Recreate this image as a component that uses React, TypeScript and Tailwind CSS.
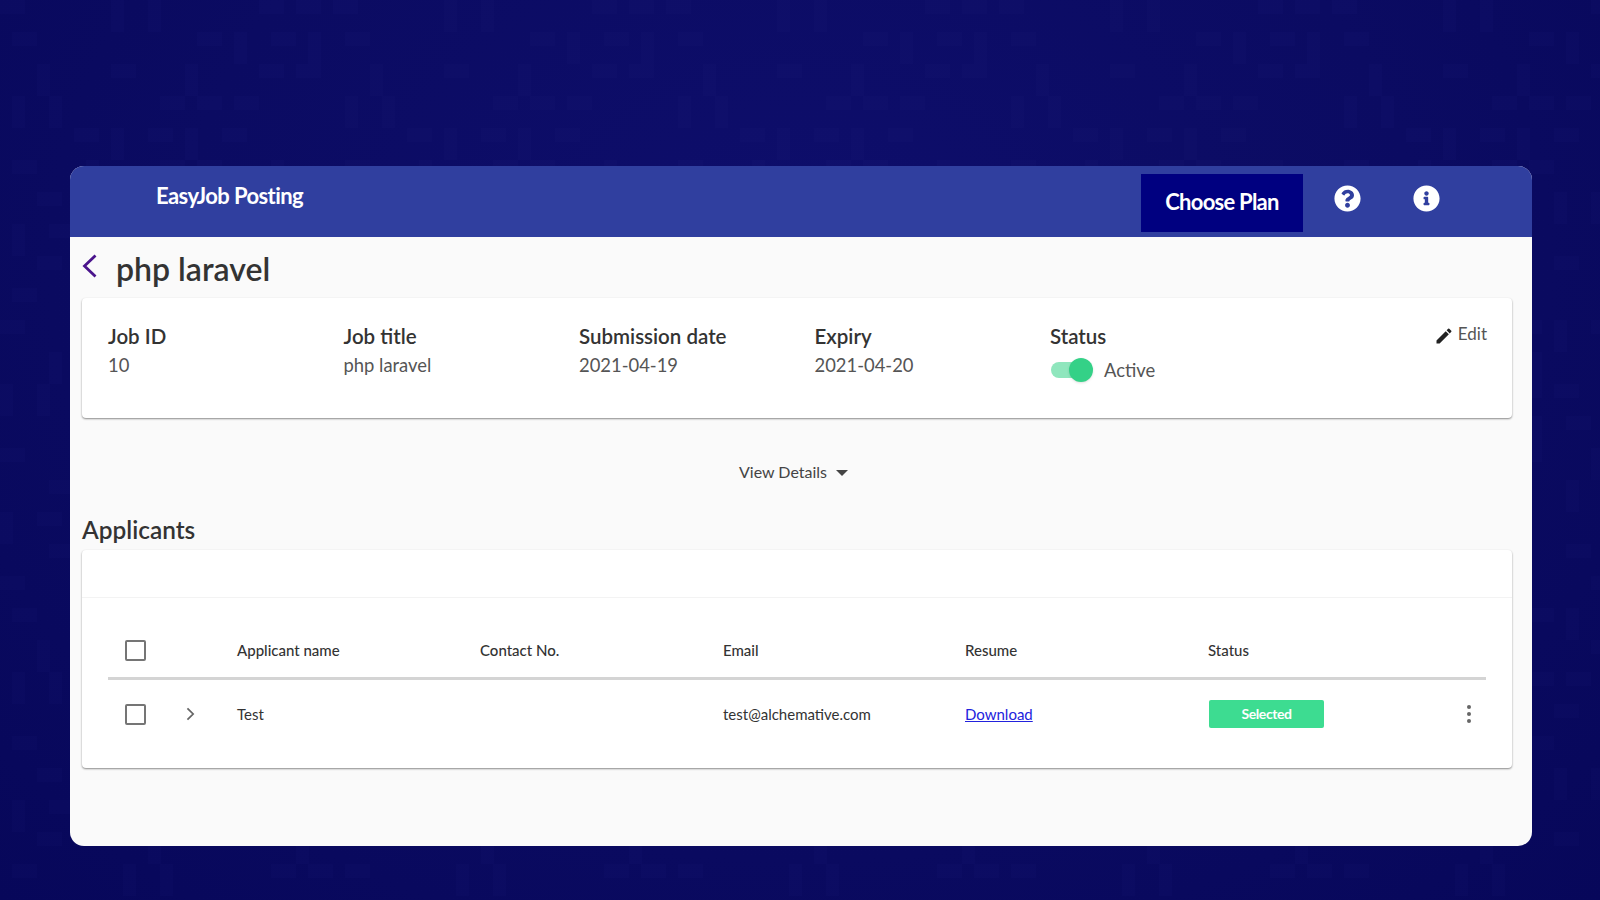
import { FaQuestionCircle, FaInfoCircle } from "react-icons/fa";
import { MdEdit } from "react-icons/md";

const summary = [
  { label: "Job ID", value: "10" },
  { label: "Job title", value: "php laravel" },
  { label: "Submission date", value: "2021-04-19" },
  { label: "Expiry", value: "2021-04-20" },
];

// faint maze-like blocks in the page background
const blocks: { x: number; y: number; w: number; h: number }[] = [];
for (let row = 0; row < 28; row++) {
  for (let col = 0; col < 44; col++) {
    const n = (col * 7 + row * 13 + col * row * 3) % 9;
    if (n < 5) {
      const vertical = n === 1 || n === 3;
      blocks.push({
        x: col * 37 + (row % 2) * 12,
        y: row * 32,
        w: vertical ? 13 : 25,
        h: vertical ? 32 : 14,
      });
    }
  }
}

function Checkbox() {
  return <span className="block h-[21px] w-[21px] rounded-[2px] border-2 border-[#757575] bg-white" />;
}

export default function App() {
  return (
    <div className="relative h-[900px] overflow-hidden bg-[#0a0a5e] bg-[radial-gradient(ellipse_at_50%_30%,#0e0e6c_0%,#0b0b62_55%,#07075a_100%)] pt-[166px] pl-[70px] font-['Lato',sans-serif]">
      <svg className="absolute inset-0 h-full w-full" viewBox="0 0 1600 900">
        {blocks.map((b, i) => (
          <rect key={i} x={b.x} y={b.y} width={b.w} height={b.h} fill="#2a2a90" opacity="0.07" />
        ))}
      </svg>
      <div className="relative flex h-[680px] w-[1462px] flex-col overflow-hidden rounded-[14px] bg-[#fafafa]">
        {/* Header */}
        <header className="flex h-[71px] shrink-0 items-start bg-[#303f9f] pl-[86px] text-white">
          <span className="mt-[16px] text-[22px] font-bold leading-[28px] tracking-[-0.6px]">EasyJob Posting</span>
          <button className="mt-[8px] ml-auto flex h-[58px] w-[162px] items-center justify-center bg-[#000080] pb-[3px] text-[22px] font-bold tracking-[-0.75px]">
            Choose Plan
          </button>
          <FaQuestionCircle className="mt-[19px] ml-[31px] text-[27px]" />
          <FaInfoCircle className="mt-[19px] ml-[52px] mr-[92px] text-[27px]" />
        </header>

        <div className="flex flex-col px-[12px]">
          {/* Title */}
          <div className="flex h-[61px] items-center">
            <svg viewBox="0 0 16 24" className="mb-[3px] h-[24px] w-[16px] fill-none stroke-[#4a148c] stroke-[2.8]">
              <path d="M13.5 1.5 2.5 12l11 10.5" />
            </svg>
            <h1 className="mt-[2px] ml-[18px] text-[32px] font-semibold leading-[40px] text-[#333333]">php laravel</h1>
          </div>

          {/* Job summary */}
          <section className="relative flex h-[120px] w-[1430px] rounded-[4px] bg-white pt-[25px] pl-[26px] shadow-[0_1px_2px_rgba(0,0,0,0.45)]">
            {summary.map((item) => (
              <div key={item.label} className="w-[235.5px]">
                <div className="text-[20.5px] font-semibold leading-[26px] text-[#333333]">{item.label}</div>
                <div className="mt-[3px] text-[18.4px] leading-[26px] text-[#555555]">{item.value}</div>
              </div>
            ))}
            <div>
              <div className="text-[20.5px] font-semibold leading-[26px] text-[#333333]">Status</div>
              <div className="mt-[8px] flex items-center pl-px">
                <span className="relative block h-[16px] w-[40px] rounded-full bg-[#8fe6bd]">
                  <span className="absolute top-[-4px] right-[-2px] h-[24px] w-[24px] rounded-full bg-[#34d187] shadow-sm" />
                </span>
                <span className="ml-[13px] text-[18.4px] leading-[26px] text-[#555555]">Active</span>
              </div>
            </div>
            <div className="absolute top-[24px] right-[25px] flex items-center text-[17px] leading-[22px] text-[#555555]">
              <MdEdit className="mt-[4px] mr-[4px] text-[20px] text-[#222222]" />
              Edit
            </div>
          </section>

          {/* View details */}
          <div className="mt-[42px] flex h-[24px] items-center justify-center pr-[15px] text-[16px] text-[#444444]">
            View Details
            <span className="mt-[2px] ml-[9px] h-0 w-0 border-x-[6px] border-t-[6px] border-x-transparent border-t-[#444444]" />
          </div>

          {/* Applicants */}
          <h2 className="mt-[30px] text-[24.4px] font-semibold leading-[32px] text-[#333333]">Applicants</h2>
          <section className="mt-[4px] h-[218px] w-[1430px] rounded-[4px] bg-white shadow-[0_1px_2px_rgba(0,0,0,0.45)]">
            <div className="h-[48px] border-b border-[#f3f3f3]" />
            <div className="px-[26px] pt-[34px]">
              <div className="grid h-[48px] grid-cols-[129px_243px_243px_242px_243px_1fr] items-center border-b-[3px] border-[#d4d4d4] pb-[9px] text-[15px] font-medium text-[#333333]">
                <span className="pl-[17px]"><Checkbox /></span>
                <span>Applicant name</span>
                <span>Contact No.</span>
                <span>Email</span>
                <span>Resume</span>
                <span>Status</span>
              </div>
              <div className="grid h-[68px] grid-cols-[129px_243px_243px_242px_243px_1fr] items-center text-[15px] text-[#333333]">
                <span className="flex items-center pl-[17px]">
                  <Checkbox />
                  <svg viewBox="0 0 10 16" className="ml-[40px] h-[14px] w-[9px] fill-none stroke-[#666666] stroke-2">
                    <path d="M1.5 1.5 8 8l-6.5 6.5" />
                  </svg>
                </span>
                <span>Test</span>
                <span />
                <span>test@alchemative.com</span>
                <a href="#" className="text-[#2222dd] underline">Download</a>
                <div className="flex items-center justify-between pr-[15px] pl-px">
                  <span className="flex h-[28px] w-[115px] items-center justify-center rounded-[2px] bg-[#3ddc91] pb-px text-[14px] font-bold tracking-[-0.4px] text-white">
                    Selected
                  </span>
                  <span className="flex flex-col gap-[3px]">
                    <i className="block h-[4px] w-[4px] rounded-full bg-[#666666]" />
                    <i className="block h-[4px] w-[4px] rounded-full bg-[#666666]" />
                    <i className="block h-[4px] w-[4px] rounded-full bg-[#666666]" />
                  </span>
                </div>
              </div>
            </div>
          </section>
        </div>
      </div>
    </div>
  );
}
